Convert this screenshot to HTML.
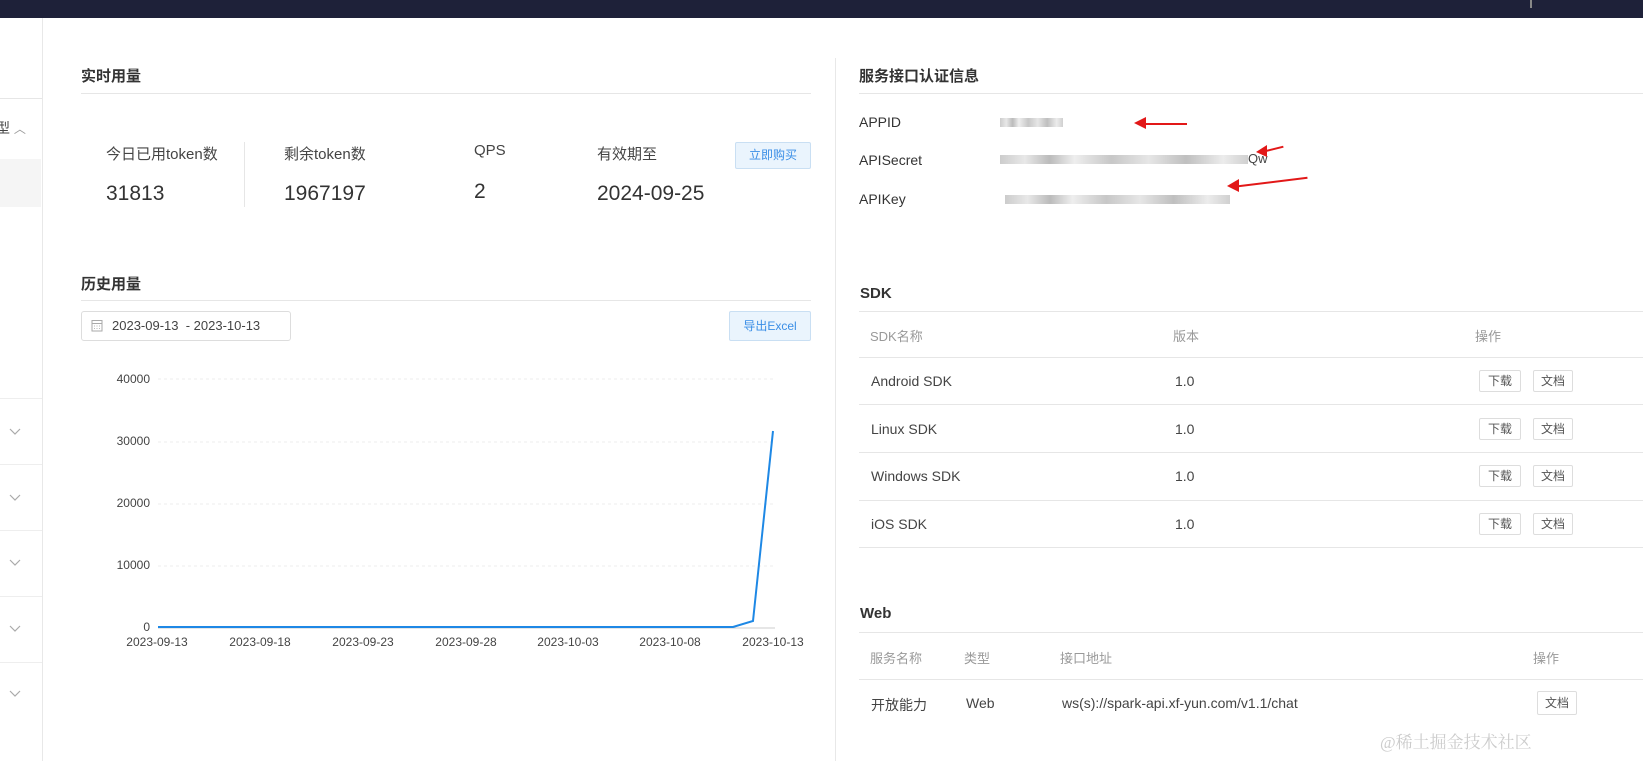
<!DOCTYPE html>
<html><head><meta charset="utf-8"><style>
*{margin:0;padding:0;box-sizing:border-box}
body{width:1643px;height:761px;overflow:hidden;background:#fff;font-family:"Liberation Sans","Noto Sans CJK SC",sans-serif;color:#333;position:relative}
.a{position:absolute;white-space:nowrap}
.h{font-weight:bold;font-size:15px;color:#333}
.line{position:absolute;height:1px;background:#e6e6e6}
.btn{position:absolute;border:1px solid #c9dff3;background:#eaf4fd;color:#3a8ee6;font-size:12px;text-align:center;border-radius:2px}
.sb{position:absolute;border:1px solid #ddd;border-radius:2px;font-size:12px;color:#555;text-align:center;background:#fff}
.blur{position:absolute;height:9px;background:linear-gradient(90deg,#ccc,#e8e8e8 10%,#bbb 20%,#eee 30%,#c7c7c7 45%,#e6e6e6 60%,#bfbfbf 75%,#ececec 90%,#d0d0d0)}
.red{position:absolute;height:2px;background:#e21818;transform-origin:left center}
</style></head><body>
<div class="a" style="left:0;top:0;width:1643px;height:18px;background:#1e2139"></div>
<div class="a" style="left:1530px;top:0;width:2px;height:8px;background:#888"></div>
<div class="a" style="left:42px;top:18px;width:1px;height:743px;background:#e8e8e8"></div>
<div class="line" style="left:0;top:98px;width:42px"></div>
<div class="a" style="left:-4px;top:118px;font-size:14px;color:#444">型 <span style="color:#999;font-size:12px">︿</span></div>
<div class="a" style="left:0;top:159px;width:41px;height:48px;background:#f5f5f5"></div>
<div class="line" style="left:0;top:398px;width:42px;background:#eee"></div>
<div class="line" style="left:0;top:464px;width:42px;background:#eee"></div>
<div class="line" style="left:0;top:530px;width:42px;background:#eee"></div>
<div class="line" style="left:0;top:596px;width:42px;background:#eee"></div>
<div class="line" style="left:0;top:662px;width:42px;background:#eee"></div>
<svg class="a" style="left:8px;top:425px" width="14" height="280"><g fill="none" stroke="#aaa" stroke-width="1.2"><path d="M2 4l5 5 5-5"/><path d="M2 70l5 5 5-5"/><path d="M2 135l5 5 5-5"/><path d="M2 201l5 5 5-5"/><path d="M2 266l5 5 5-5"/></g></svg>

<div class="a" style="left:835px;top:58px;width:1px;height:703px;background:#e8e8e8"></div>

<div class="a h" style="left:81px;top:65px">实时用量</div>
<div class="line" style="left:81px;top:93px;width:730px"></div>
<div class="a" style="left:106px;top:143px;font-size:15px;color:#444">今日已用token数</div>
<div class="a" style="left:106px;top:182px;font-size:21px;color:#333">31813</div>
<div class="a" style="left:244px;top:142px;width:1px;height:65px;background:#e6e6e6"></div>
<div class="a" style="left:284px;top:143px;font-size:15px;color:#444">剩余token数</div>
<div class="a" style="left:284px;top:182px;font-size:21px;color:#333">1967197</div>
<div class="a" style="left:474px;top:142px;font-size:15px;color:#444">QPS</div>
<div class="a" style="left:474px;top:180px;font-size:21px;color:#333">2</div>
<div class="a" style="left:597px;top:143px;font-size:15px;color:#444">有效期至</div>
<div class="a" style="left:597px;top:182px;font-size:21px;color:#333">2024-09-25</div>
<div class="btn" style="left:735px;top:142px;width:76px;height:27px;line-height:25px">立即购买</div>

<div class="a h" style="left:81px;top:273px">历史用量</div>
<div class="line" style="left:81px;top:300px;width:730px"></div>
<div class="a" style="left:81px;top:311px;width:210px;height:30px;border:1px solid #ddd;border-radius:3px"></div>
<svg class="a" style="left:91px;top:319px" width="12" height="13"><rect x="1" y="1.5" width="10" height="10.5" fill="none" stroke="#aaa"/><path d="M1 4.5h10" stroke="#aaa"/><path d="M3 7h1M5.5 7h1M8 7h1M3 9.5h1M5.5 9.5h1M8 9.5h1" stroke="#bbb"/></svg>
<div class="a" style="left:112px;top:318px;font-size:13px;color:#444">2023-09-13 &nbsp;- 2023-10-13</div>
<div class="btn" style="left:729px;top:311px;width:82px;height:30px;line-height:28px">导出Excel</div>

<svg class="a" style="left:100px;top:365px" width="720" height="290">
<g stroke="#eee" stroke-dasharray="3,3"><path d="M58 14H675M58 77H675M58 139H675M58 201H675"/></g>
<path d="M58 263H675" stroke="#ccc"/>
<g font-size="12" fill="#444" text-anchor="end" font-family="Liberation Sans"><text x="50" y="18">40000</text><text x="50" y="80">30000</text><text x="50" y="142">20000</text><text x="50" y="204">10000</text><text x="50" y="266">0</text></g>
<g font-size="12" fill="#444" text-anchor="middle" font-family="Liberation Sans"><text x="57" y="281">2023-09-13</text><text x="160" y="281">2023-09-18</text><text x="263" y="281">2023-09-23</text><text x="366" y="281">2023-09-28</text><text x="468" y="281">2023-10-03</text><text x="570" y="281">2023-10-08</text><text x="673" y="281">2023-10-13</text></g>
<polyline points="58,262 633,262 653,256 673,66" fill="none" stroke="#1e88e5" stroke-width="2"/>
</svg>

<div class="a h" style="left:859px;top:65px">服务接口认证信息</div>
<div class="line" style="left:859px;top:93px;width:784px"></div>
<div class="a" style="left:859px;top:114px;font-size:14px;color:#333">APPID</div>
<div class="a" style="left:859px;top:152px;font-size:14px;color:#333">APISecret</div>
<div class="a" style="left:859px;top:191px;font-size:14px;color:#333">APIKey</div>
<div class="blur" style="left:1000px;top:118px;width:63px"></div>
<div class="blur" style="left:1000px;top:155px;width:248px"></div>
<div class="a" style="left:1248px;top:151px;font-size:13px;color:#444">Qw</div>
<div class="blur" style="left:1005px;top:195px;width:225px"></div>
<div class="red" style="left:1140px;top:123px;width:47px"></div>
<svg class="a" style="left:1134px;top:115px" width="12" height="16"><path d="M0 8L12 2V14Z" fill="#e21818"/></svg>
<div class="red" style="left:1262px;top:151px;width:22px;transform:rotate(-14deg)"></div>
<svg class="a" style="left:1256px;top:144px" width="12" height="14"><path d="M0 8L11 1V13Z" fill="#e21818"/></svg>
<div class="red" style="left:1232px;top:186px;width:76px;transform:rotate(-7deg)"></div>
<svg class="a" style="left:1227px;top:178px" width="12" height="16"><path d="M0 8L12 1V14Z" fill="#e21818"/></svg>

<div class="a h" style="left:860px;top:285px">SDK</div>
<div class="line" style="left:859px;top:311px;width:784px"></div>
<div class="a" style="left:870px;top:326px;font-size:13px;color:#999">SDK名称</div>
<div class="a" style="left:1173px;top:326px;font-size:13px;color:#999">版本</div>
<div class="a" style="left:1475px;top:326px;font-size:13px;color:#999">操作</div>
<div class="line" style="left:859px;top:357px;width:784px"></div>
<div class="a" style="left:871px;top:373px;font-size:14px;color:#444">Android SDK</div><div class="a" style="left:1175px;top:373px;font-size:14px;color:#444">1.0</div>
<div class="line" style="left:859px;top:404px;width:784px"></div>
<div class="a" style="left:871px;top:421px;font-size:14px;color:#444">Linux SDK</div><div class="a" style="left:1175px;top:421px;font-size:14px;color:#444">1.0</div>
<div class="line" style="left:859px;top:452px;width:784px"></div>
<div class="a" style="left:871px;top:468px;font-size:14px;color:#444">Windows SDK</div><div class="a" style="left:1175px;top:468px;font-size:14px;color:#444">1.0</div>
<div class="line" style="left:859px;top:500px;width:784px"></div>
<div class="a" style="left:871px;top:516px;font-size:14px;color:#444">iOS SDK</div><div class="a" style="left:1175px;top:516px;font-size:14px;color:#444">1.0</div>
<div class="line" style="left:859px;top:547px;width:784px"></div>
<div class="sb" style="left:1479px;top:370px;width:42px;height:22px;line-height:20px">下载</div><div class="sb" style="left:1533px;top:370px;width:40px;height:22px;line-height:20px">文档</div>
<div class="sb" style="left:1479px;top:418px;width:42px;height:22px;line-height:20px">下载</div><div class="sb" style="left:1533px;top:418px;width:40px;height:22px;line-height:20px">文档</div>
<div class="sb" style="left:1479px;top:465px;width:42px;height:22px;line-height:20px">下载</div><div class="sb" style="left:1533px;top:465px;width:40px;height:22px;line-height:20px">文档</div>
<div class="sb" style="left:1479px;top:513px;width:42px;height:22px;line-height:20px">下载</div><div class="sb" style="left:1533px;top:513px;width:40px;height:22px;line-height:20px">文档</div>

<div class="a h" style="left:860px;top:605px">Web</div>
<div class="line" style="left:859px;top:632px;width:784px"></div>
<div class="a" style="left:870px;top:648px;font-size:13px;color:#999">服务名称</div>
<div class="a" style="left:964px;top:648px;font-size:13px;color:#999">类型</div>
<div class="a" style="left:1060px;top:648px;font-size:13px;color:#999">接口地址</div>
<div class="a" style="left:1533px;top:648px;font-size:13px;color:#999">操作</div>
<div class="line" style="left:859px;top:679px;width:784px"></div>
<div class="a" style="left:871px;top:695px;font-size:14px;color:#444">开放能力</div>
<div class="a" style="left:966px;top:695px;font-size:14px;color:#444">Web</div>
<div class="a" style="left:1062px;top:695px;font-size:14px;color:#444">ws(s)://spark-api.xf-yun.com/v1.1/chat</div>
<div class="sb" style="left:1537px;top:691px;width:40px;height:24px;line-height:22px">文档</div>
<div class="a" style="left:1380px;top:728px;font-size:17px;color:#ccc;font-family:'Liberation Serif','Noto Serif CJK SC',serif">@稀土掘金技术社区</div>
</body></html>
